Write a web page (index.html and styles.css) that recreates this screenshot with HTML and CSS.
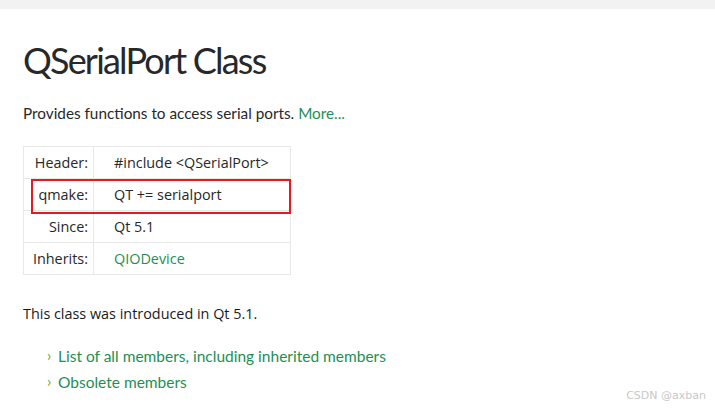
FILE: index.html
```html
<!DOCTYPE html>
<html>
<head>
<meta charset="utf-8">
<link rel="stylesheet" href="styles.css">
</head>
<body>
<div class="topbar"></div>
<main class="content">
  <h1 class="title">QSerialPort Class</h1>
  <p class="brief">Provides functions to access serial ports. <a class="link" href="#">More...</a></p>
  <div class="table-wrap">
    <table class="info">
      <tr><td class="key">Header:</td><td class="val">#include &lt;QSerialPort&gt;</td></tr>
      <tr><td class="key">qmake:</td><td class="val">QT += serialport</td></tr>
      <tr><td class="key">Since:</td><td class="val">Qt 5.1</td></tr>
      <tr><td class="key">Inherits:</td><td class="val"><a class="link" href="#">QIODevice</a></td></tr>
    </table>
    <div class="highlight"></div>
  </div>
  <p class="since">This class was introduced in Qt 5.1.</p>
  <ul class="members">
    <li><a class="link" href="#">List of all members, including inherited members</a></li>
    <li><a class="link" href="#">Obsolete members</a></li>
  </ul>
</main>
<div class="watermark">CSDN @axban</div>
</body>
</html>
```
FILE: styles.css
```css
html, body {
  margin: 0;
  padding: 0;
  background: #ffffff;
  width: 715px;
  height: 408px;
  overflow: hidden;
  position: relative;
}
.topbar {
  height: 9px;
  background: #f2f2f2;
}
.content {
  padding: 0 0 0 23px;
  color: #26282a;
}
.title {
  margin: 29px 0 0 0;
  font-family: "Lato", "Open Sans", sans-serif;
  font-weight: 400;
  font-size: 36px;
  letter-spacing: -1.8px;
  line-height: 44px;
  color: #26282a;
}
.brief {
  margin: 21px 0 0 0;
  font-family: "Lato", sans-serif;
  font-size: 15.3px;
  line-height: 20px;
  color: #26282a;
}
.link {
  color: #1d8f55;
  text-decoration: none;
}
.table-wrap {
  position: relative;
  margin-top: 23px;
  width: 268px;
}
.info {
  border-collapse: collapse;
  font-family: "Open Sans", sans-serif;
  font-size: 14.4px;
  color: #26282a;
  border: 1px solid #e8e8e8;
}
.info td {
  border: 1px solid #e8e8e8;
  height: 31px;
  padding: 0;
  vertical-align: middle;
}
.info .key {
  width: 64px;
  text-align: right;
  padding-right: 5px;
}
.info .val {
  width: 176px;
  padding-left: 20px;
}
.highlight {
  position: absolute;
  left: 8px;
  top: 33px;
  width: 256px;
  height: 31px;
  border: 2px solid #e5191f;
}
.since {
  margin: 29px 0 0 0;
  font-family: "Open Sans", sans-serif;
  font-size: 14.4px;
  line-height: 20px;
  color: #1a1a1a;
}
.members {
  list-style: none;
  margin: 19px 0 0 0;
  padding: 0 0 0 24px;
  font-family: "Lato", sans-serif;
  font-size: 15.5px;
}
.members li {
  line-height: 26px;
  position: relative;
  padding-left: 11px;
}
.members li::before {
  content: "\203A";
  position: absolute;
  left: 0;
  top: -1px;
  color: #5aab2a;
  font-size: 15px;
}
.watermark {
  position: absolute;
  right: 9px;
  bottom: 6px;
  font-family: "DejaVu Sans", sans-serif;
  font-size: 11px;
  color: #c8c8c8;
}
```
